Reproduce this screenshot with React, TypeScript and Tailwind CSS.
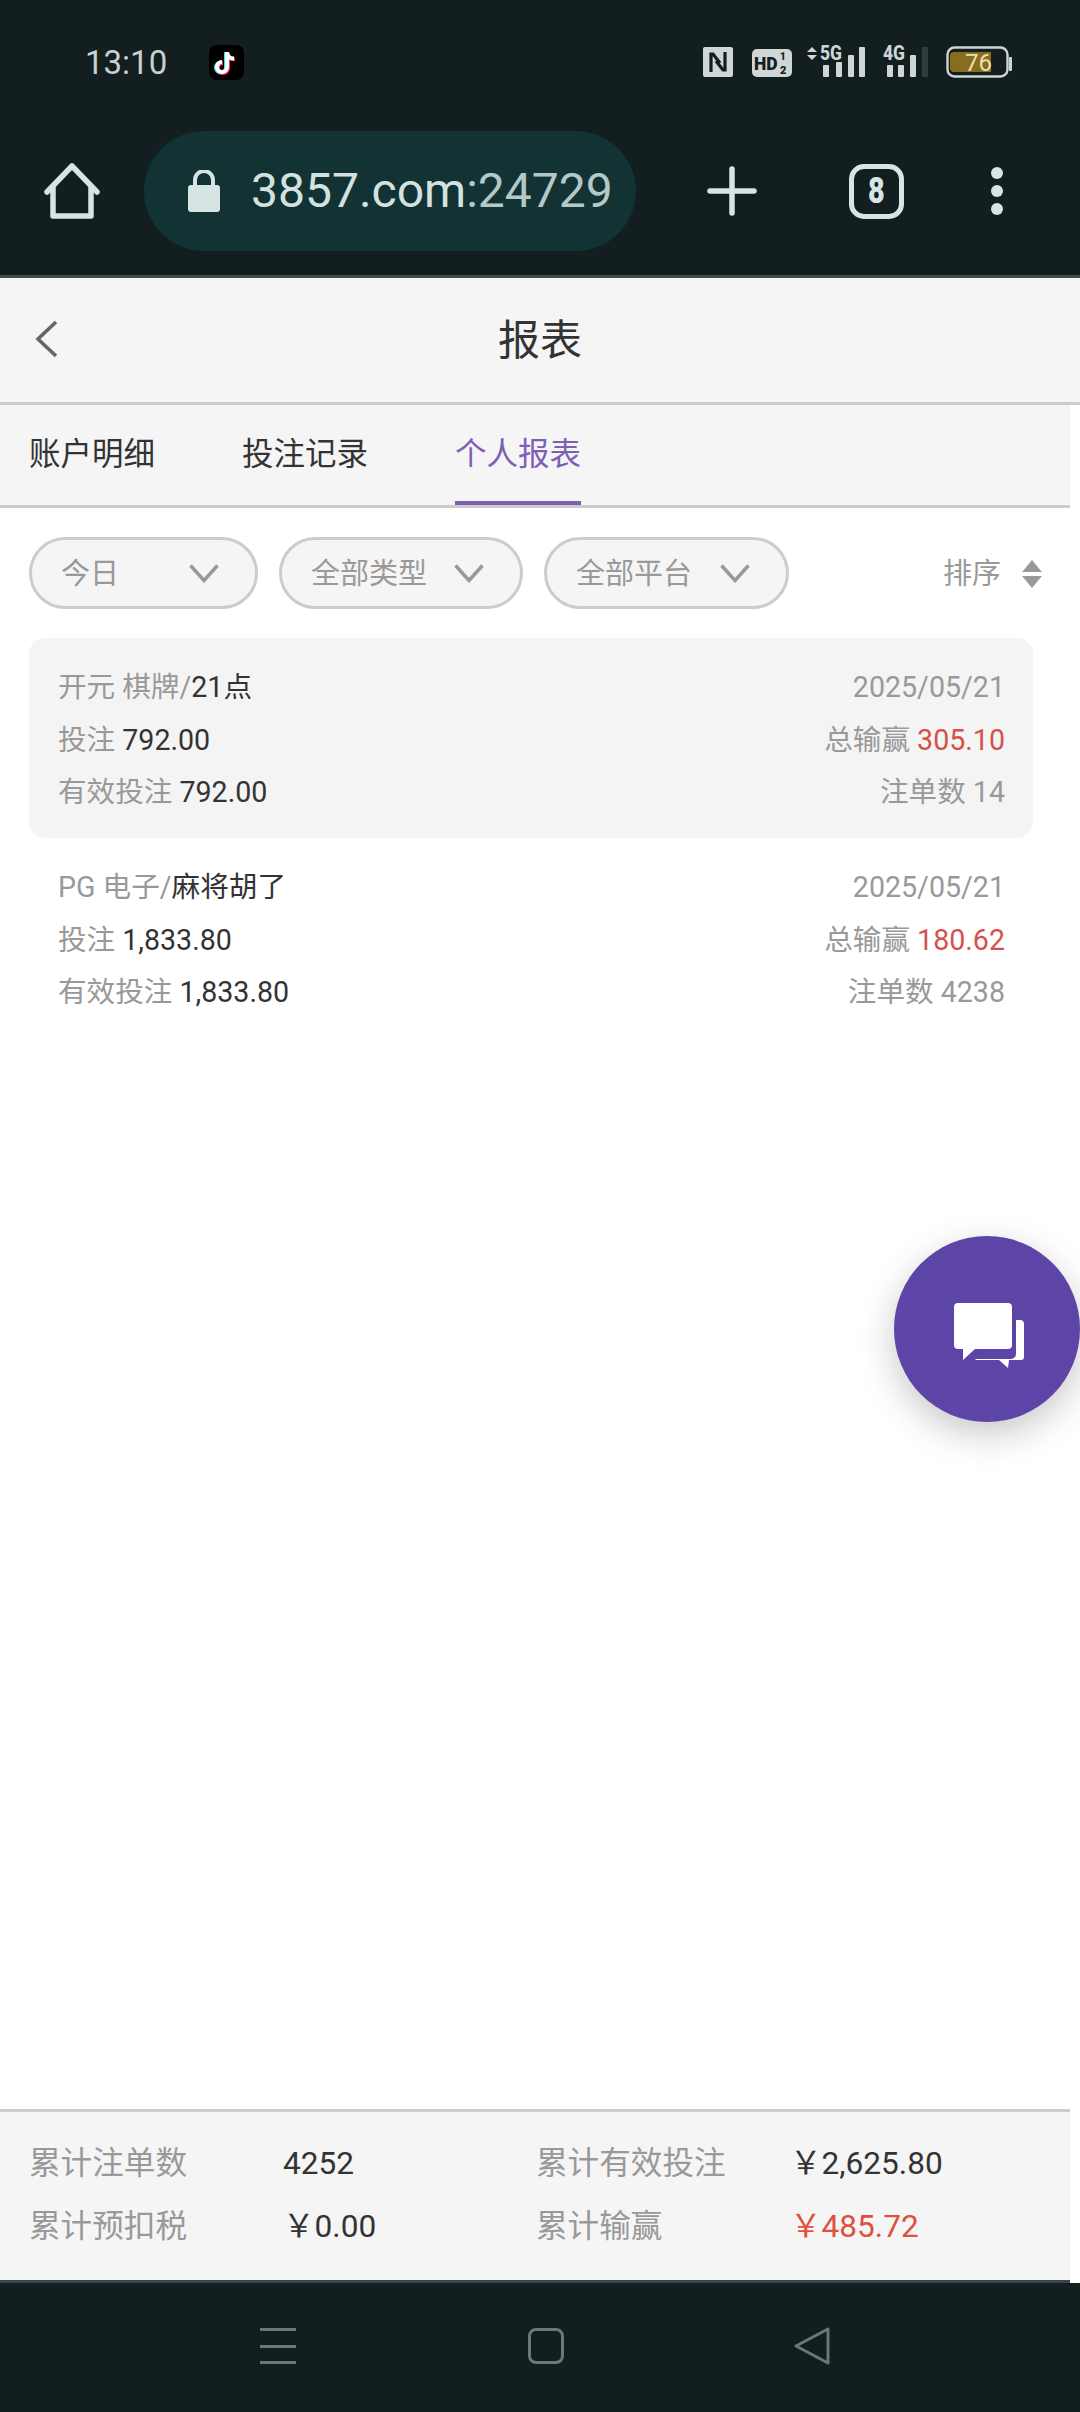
const reports = [
  { platform: '开元 棋牌/', game: '21点', date: '2025/05/21', bet: '792.00', win: '305.10', valid: '792.00', count: '14', active: true },
  { platform: 'PG 电子/', game: '麻将胡了', date: '2025/05/21', bet: '1,833.80', win: '180.62', valid: '1,833.80', count: '4238', active: false },
]

function StatusIcons() {
  return (
    <svg width="312" height="44" viewBox="0 -10 312 44" className="-mt-[10px] block">
      {/* NFC */}
      <rect x="1" y="2" width="30" height="30" rx="2" fill="#d0d5d6" />
      <path d="M9 27V9h2l7 9M23 7v18h-2l-7-9" fill="none" stroke="#121e1f" strokeWidth="3.2" />
      {/* HD 1/2 */}
      <rect x="50" y="4" width="40" height="28" rx="5" fill="#d0d5d6" />
      <text x="52" y="24.500" fontFamily="Roboto" fontWeight="900" fontSize="17.500" fill="#121e1f">HD</text>
      <text x="78" y="15" fontFamily="Roboto" fontWeight="900" fontSize="10" fill="#121e1f">1</text>
      <text x="78" y="29" fontFamily="Roboto" fontWeight="900" fontSize="11" fill="#121e1f">2</text>
      {/* 5G */}
      <path d="M105 7l5-5 5 5zM105 10l5 5 5-5z" fill="#d0d5d6" />
      <text x="118" y="15" fontFamily="Roboto" fontWeight="800" fontSize="20" fill="#d0d5d6" textLength="22" lengthAdjust="spacingAndGlyphs">5G</text>
      <rect x="121" y="20" width="6" height="12" rx="1" fill="#d0d5d6" />
      <rect x="134" y="17" width="6" height="15" rx="1" fill="#d0d5d6" />
      <rect x="146" y="10" width="6" height="22" rx="1" fill="#d0d5d6" />
      <rect x="157" y="2" width="6" height="30" rx="1" fill="#d0d5d6" />
      {/* 4G */}
      <text x="181" y="15" fontFamily="Roboto" fontWeight="800" fontSize="20" fill="#d0d5d6" textLength="22" lengthAdjust="spacingAndGlyphs">4G</text>
      <rect x="185" y="20" width="6" height="12" rx="1" fill="#d0d5d6" />
      <rect x="196" y="20" width="6" height="12" rx="1" fill="#d0d5d6" />
      <rect x="208" y="10" width="6" height="22" rx="1" fill="#d0d5d6" />
      <rect x="220" y="2" width="6" height="30" rx="1" fill="#2f3d3e" />
      {/* battery */}
      <rect x="245.500" y="2.500" width="60" height="29" rx="7" fill="none" stroke="#d0d5d6" strokeWidth="2.400" />
      <path d="M252 7h37v20h-37a4 4 0 0 1-4-4V11a4 4 0 0 1 4-4z" fill="#8a6d1c" />
      <text x="263" y="25.500" fontFamily="Roboto" fontSize="24" fill="#e9dfb4">76</text>
      <rect x="307" y="12" width="3" height="14" rx="1" fill="#d0d5d6" />
    </svg>
  )
}

function TikTokIcon() {
  return (
    <div className="flex h-[35px] w-[35px] items-center justify-center rounded-[8px] bg-black">
      <svg width="25" height="27" viewBox="0 0 25 27" fill="none" strokeWidth="4">
        <path d="M13 3v15a5 5 0 1 1-5-5" stroke="#25f4ee" transform="translate(-1 .5)" />
        <path d="M13 3c0 4 3 6.500 7 6.500" stroke="#25f4ee" transform="translate(-1 .5)" />
        <path d="M13 3v15a5 5 0 1 1-5-5" stroke="#fe2c55" transform="translate(1 1)" />
        <path d="M13 3c0 4 3 6.500 7 6.500" stroke="#fe2c55" transform="translate(1 1)" />
        <path d="M13 3v15a5 5 0 1 1-5-5" stroke="#fff" />
        <path d="M13 3c0 4 3 6.500 7 6.500" stroke="#fff" />
      </svg>
    </div>
  )
}

function BrowserBar() {
  return (
    <div className="flex h-[275px] flex-col bg-[#121e1f]">
      <div className="flex h-[128px] items-start pt-[45px]">
        <span className="ml-[85px] w-[124px] text-[33px] leading-[35px] text-[#c8d0d0]">13:10</span>
        <TikTokIcon />
        <div className="ml-auto mr-[66px]">
          <StatusIcons />
        </div>
      </div>
      <div className="flex h-[126px] items-center">
        {/* home */}
        <svg width="56" height="56" viewBox="0 0 56 56" fill="none" className="ml-[44px]" stroke="#d9e5e4" strokeWidth="5.500" strokeLinejoin="round" strokeLinecap="round">
          <path d="M3 29L28 3l25 26" />
          <path d="M9 24v29h38V24" />
        </svg>
        <div className="ml-[44px] flex h-[120px] w-[492px] items-center rounded-full bg-[#123233] pl-[44px]">
          <svg width="32" height="42" viewBox="0 0 32 42" className="shrink-0">
            <path d="M7 17v-7a9 9 0 0 1 18 0v7" fill="none" stroke="#d6e4e3" strokeWidth="4" />
            <rect x="0" y="15" width="32" height="27" rx="3" fill="#d6e4e3" />
          </svg>
          <span className="ml-[31px] whitespace-nowrap text-[48px] leading-none text-[#d3e2e1]">
            3857.com<span className="text-[#b3c8c7]">:24729</span>
          </span>
        </div>
        {/* new tab */}
        <svg width="50" height="50" viewBox="0 0 50 50" className="ml-[71px]" stroke="#d9e5e4" strokeWidth="5.500" strokeLinecap="round">
          <path d="M25 3v44M3 25h44" />
        </svg>
        <div className="ml-[92px] flex h-[55px] w-[55px] items-center justify-center rounded-[15px] border-[5px] border-[#d9e5e4] text-[36px] font-black leading-none text-[#d9e5e4]">
          <span className="inline-block scale-x-[0.8]">8</span>
        </div>
        <div className="ml-[87px] flex flex-col gap-[6px]">
          <div className="h-[12px] w-[12px] rounded-full bg-[#d9e5e4]" />
          <div className="h-[12px] w-[12px] rounded-full bg-[#d9e5e4]" />
          <div className="h-[12px] w-[12px] rounded-full bg-[#d9e5e4]" />
        </div>
      </div>
    </div>
  )
}

function FilterPill({ label, width }: { label: string; width: string }) {
  return (
    <div className={`flex h-[72px] items-center justify-between rounded-full border-[3px] border-[#cccccc] bg-[#f5f5f5] pl-[29px] pr-[36px] text-[29px] text-[#999999] ${width}`}>
      <span className="pt-[4px]">{label}</span>
      <svg width="30" height="19" viewBox="0 0 30 19" fill="none" stroke="#999999" strokeWidth="3.500">
        <path d="M1.500 1.500L15 16.500 28.500 1.500" />
      </svg>
    </div>
  )
}

function ReportRow({ item }: { item: (typeof reports)[number] }) {
  return (
    <div className={`mx-[29px] flex h-[200px] w-[1004px] justify-between rounded-[16px] pl-[29px] pr-[28px] pt-[23px] text-[28.600px] leading-[52.500px] text-[#999999] ${item.active ? 'bg-[#f4f4f4]' : ''}`}>
      <div>
        <div>
          {item.platform}
          <span className="text-[#333333]">{item.game}</span>
        </div>
        <div>
          投注 <span className="text-[#333333]">{item.bet}</span>
        </div>
        <div>
          有效投注 <span className="text-[#333333]">{item.valid}</span>
        </div>
      </div>
      <div className="text-right">
        <div>{item.date}</div>
        <div>
          总输赢 <span className="text-[#d4524a]">{item.win}</span>
        </div>
        <div>注单数 {item.count}</div>
      </div>
    </div>
  )
}

function Summary() {
  return (
    <div className="h-[174px] w-[1070px] border-y-[3px] border-t-[#cccccc] border-b-[#38484a] bg-[#f5f5f5] pl-[29px] pt-[20px] text-[31.600px] leading-[63px] text-[#999999]">
      <div className="grid grid-cols-[254px_253px_254px_1fr]">
        <div>累计注单数</div>
        <div className="text-[#333333]">4252</div>
        <div>累计有效投注</div>
        <div className="text-[#333333]">￥2,625.80</div>
        <div>累计预扣税</div>
        <div className="text-[#333333]">￥0.00</div>
        <div>累计输赢</div>
        <div className="text-[#e0503f]">￥485.72</div>
      </div>
    </div>
  )
}

export default function App() {
  return (
    <div className="relative flex h-[2412px] w-[1080px] flex-col overflow-hidden bg-white font-[Roboto,'Noto_Sans_CJK_SC',sans-serif]">
      <BrowserBar />
      <div className="h-[3px] bg-[#3f4f4e]" />

      {/* title */}
      <div className="relative flex h-[127px] items-center justify-center border-b-[3px] border-[#cccccc] bg-[#f5f5f5] pt-[2px] text-[42px] leading-none text-[#333333]">
        <svg width="24" height="38" viewBox="0 0 24 38" fill="none" stroke="#666666" strokeWidth="3.600" className="absolute left-[34px] top-[42px]">
          <path d="M22 2L4 19l18 17" />
        </svg>
        报表
      </div>

      {/* tabs */}
      <div className="flex h-[103px] w-[1070px] gap-[87px] border-b-[3px] border-[#cccccc] bg-[#f5f5f5] pl-[29px] text-[31.500px] text-[#333333]">
        <div className="flex h-full items-center border-b-[4px] border-transparent pt-[4px]">账户明细</div>
        <div className="flex h-full items-center border-b-[4px] border-transparent pt-[4px]">投注记录</div>
        <div className="flex h-full items-center border-b-[4px] border-[#7e5fb5] pt-[4px] text-[#7e5fb5]">个人报表</div>
      </div>

      {/* filters */}
      <div className="flex items-center pl-[29px] pr-[38px] pt-[29px]">
        <div className="flex gap-[21px]">
          <FilterPill label="今日" width="w-[229px]" />
          <FilterPill label="全部类型" width="w-[244px]" />
          <FilterPill label="全部平台" width="w-[245px]" />
        </div>
        <div className="ml-auto flex items-center gap-[21px] text-[29px] text-[#999999]">
          <span className="pt-[3px]">排序</span>
          <svg width="20" height="28" viewBox="0 0 20 28" fill="#999999" className="mt-[2px]">
            <path d="M10 0l10 12H0zM0 16h20L10 28z" />
          </svg>
        </div>
      </div>

      <div className="mt-[29px] flex-1">
        {reports.map((item) => (
          <ReportRow key={item.platform} item={item} />
        ))}
      </div>

      <Summary />

      {/* system navigation */}
      <div className="flex h-[129px] items-start bg-[#121e1f] pt-[45px]">
        <div className="ml-[260px] flex h-[36px] w-[36px] flex-col justify-between">
          <div className="h-[3px] bg-[#6b7878]" />
          <div className="h-[3px] bg-[#6b7878]" />
          <div className="h-[3px] bg-[#6b7878]" />
        </div>
        <div className="ml-[232px] h-[36px] w-[36px] rounded-[8px] border-[3px] border-[#6b7878]" />
        <svg width="36" height="38" viewBox="0 0 36 38" fill="none" stroke="#6b7878" strokeWidth="3" strokeLinejoin="round" className="ml-[230px] -mt-[1px]">
          <path d="M34 2L2 19l32 17z" />
        </svg>
      </div>

      {/* floating chat button */}
      <div className="absolute left-[894px] top-[1236px] flex h-[186px] w-[186px] items-center justify-center rounded-full bg-[#5c45a6] shadow-[0_12px_36px_rgba(0,0,0,0.22)]">
        <svg width="70" height="66" viewBox="0 0 70 66" fill="#ffffff" className="ml-[4px] mt-[14px]">
          <path d="M62 17h4a4 4 0 0 1 4 4v33a3 3 0 0 1-3 3H55l-1 8-9-8H23a3 3 0 0 1-2-1h36a5 5 0 0 0 5-5z" />
          <path d="M4 0h50a4 4 0 0 1 4 4v38a4 4 0 0 1-4 4H21L9 57V46H4a4 4 0 0 1-4-4V4a4 4 0 0 1 4-4z" />
        </svg>
      </div>
    </div>
  )
}
